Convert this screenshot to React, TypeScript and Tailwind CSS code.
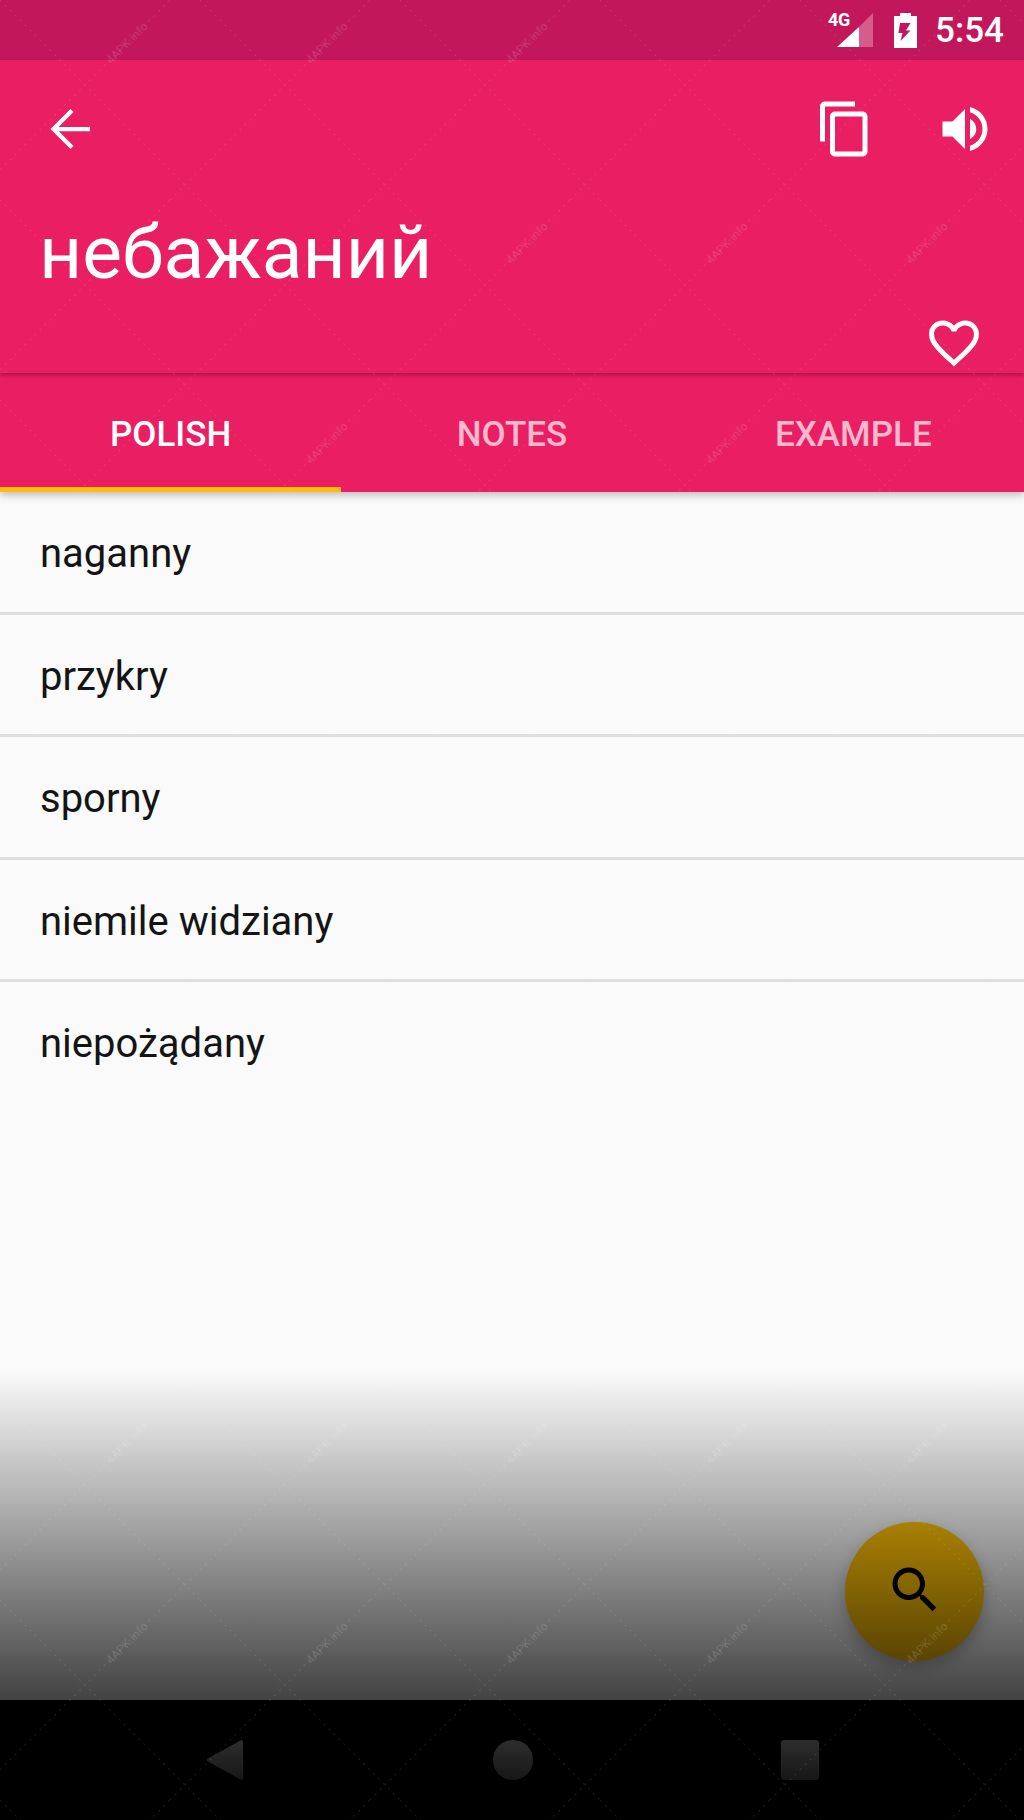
import React from "react";

const Icon = ({ d, className }: { d: string; className: string }) => (
  <svg viewBox="0 0 24 24" className={className} fill="currentColor">
    <path d={d} />
  </svg>
);

const items = ["naganny", "przykry", "sporny", "niemile widziany", "niepożądany"];

// stamp centres that stay clear of the page's own text
const stamps = [
  [127, 43], [327, 43], [527, 43],
  [527, 243], [727, 243], [927, 243],
  [327, 443], [727, 443],
  [127, 1443], [327, 1443], [527, 1443], [727, 1443], [927, 1443],
  [127, 1643], [327, 1643], [527, 1643], [727, 1643], [927, 1643],
];

export default function App() {
  return (
    <div
      className="relative flex h-[1820px] w-[1024px] flex-col overflow-hidden bg-[#fafafa]"
      style={{ fontFamily: "Roboto, 'Noto Sans', sans-serif" }}
    >
      {/* status bar */}
      <div className="flex h-[60px] shrink-0 items-center justify-end bg-[#c2185b] text-white">
        <div className="relative mr-[21px] h-[34px] w-[36px]">
          <svg viewBox="0 0 36 34" className="h-[34px] w-[36px]">
            <path d="M36 0V34H22V14Z" fill="#fff" fillOpacity="0.3" />
            <path d="M22 14V34H0Z" fill="#fff" />
          </svg>
          <span className="absolute left-[-9px] top-[-2px] text-[18px] font-bold leading-[18px] tracking-[-0.5px]">4G</span>
        </div>
        <svg viewBox="0 0 23 35" className="mr-[18px] h-[35px] w-[23px]">
          <path
            fillRule="evenodd"
            fill="#fff"
            d="M6 0H17V3H23V35H0V3H6ZM6 10H16.5L12 17.5H16.5L6.5 28L8.5 20H4.5Z"
          />
        </svg>
        <span className="mr-[20px] text-[35px] font-medium leading-none">5:54</span>
      </div>

      {/* header */}
      <div className="relative z-20 flex h-[313px] shrink-0 flex-col bg-[#e91e63] text-white shadow-[0_2px_4px_rgba(0,0,0,0.3)]">
        <div className="flex items-center pl-[40px] pr-[29px] pt-[39px]">
          <svg viewBox="0 0 24 24" className="h-[60px] w-[60px]" fill="none" stroke="currentColor" strokeWidth="1.7">
            <path d="M20 12H5.6M12.8 4.6L5.4 12L12.8 19.4" />
          </svg>
          <Icon
            className="ml-auto h-[60px] w-[60px]"
            d="M16 1H4c-1.1 0-2 .9-2 2v14h2V3h12V1zm3 4H8c-1.1 0-2 .9-2 2v14c0 1.1.9 2 2 2h11c1.1 0 2-.9 2-2V7c0-1.1-.9-2-2-2zm0 16H8V7h11v14z"
          />
          <Icon
            className="ml-[60px] h-[60px] w-[60px]"
            d="M3 9v6h4l5 5V4L7 9H3zm13.5 3c0-1.77-1.02-3.29-2.5-4.03v8.05c1.48-.73 2.5-2.25 2.5-4.02zM14 3.23v2.06c2.89.86 5 3.54 5 6.71s-2.11 5.85-5 6.71v2.06c4.01-.91 7-4.49 7-8.77s-2.99-7.86-7-8.77z"
          />
        </div>
        <div className="pl-[39px] pt-[53px] text-[75px] leading-[80px]">небажаний</div>
        <div className="mt-auto flex justify-end pr-[40px]">
          <Icon
            className="h-[60px] w-[60px]"
            d="M16.5 3c-1.74 0-3.41.81-4.5 2.09C10.91 3.81 9.24 3 7.5 3 4.42 3 2 5.42 2 8.5c0 3.78 3.4 6.86 8.55 11.54L12 21.35l1.45-1.32C18.6 15.36 22 12.28 22 8.5 22 5.42 19.58 3 16.5 3zm-4.4 15.55l-.1.1-.1-.1C7.14 14.24 4 11.39 4 8.5 4 6.5 5.5 5 7.5 5c1.54 0 3.04.99 3.57 2.36h1.87C13.46 5.99 14.96 5 16.5 5c2 0 3.5 1.5 3.5 3.5 0 2.89-3.14 5.74-7.9 10.05z"
          />
        </div>
      </div>

      {/* tabs */}
      <div className="relative z-10 grid h-[119px] shrink-0 grid-cols-3 bg-[#e91e63] text-[35px] font-medium shadow-[0_3px_8px_rgba(0,0,0,0.25)]">
        <div className="flex items-center justify-center border-b-[5px] border-[#ffbc08] pt-[11px] text-white">POLISH</div>
        <div className="flex items-center justify-center border-b-[5px] border-transparent pt-[11px] text-white/70">NOTES</div>
        <div className="flex items-center justify-center border-b-[5px] border-transparent pt-[11px] text-white/70">EXAMPLE</div>
      </div>

      {/* list */}
      <div className="flex-1 bg-[#fafafa] text-[40px] text-[#141414]">
        {items.map((t, i) => (
          <div
            key={t}
            className={
              i < items.length - 1
                ? "flex h-[122.6px] items-center border-b-[3px] border-[#dedede] pl-[40px] pt-[5px]"
                : "flex h-[122.6px] items-center border-b-[3px] border-transparent pl-[40px] pt-[3px]"
            }
          >
            {t}
          </div>
        ))}
      </div>

      {/* navigation bar */}
      <div className="flex h-[120px] shrink-0 items-center justify-center gap-[248px] bg-black text-white">
        <svg viewBox="0 0 40 40" className="h-[40px] w-[40px]">
          <path d="M35.5 0.5L3 18.5a1.6 1.6 0 0 0 0 3L35.5 39.5a1.5 1.5 0 0 0 2.5-1.2V1.7a1.5 1.5 0 0 0-2.5-1.2Z" fill="#fff" />
        </svg>
        <div className="h-[40px] w-[40px] rounded-full bg-white" />
        <div className="h-[40px] w-[38px] rounded-[3px] bg-white" />
      </div>

      {/* floating button */}
      <div className="absolute left-[845px] top-[1522px] z-30 flex h-[139px] w-[139px] items-center justify-center rounded-full bg-[#ffc107] pb-[3px] text-black shadow-[0_6px_16px_rgba(0,0,0,0.25)]">
        <Icon
          className="h-[60px] w-[60px]"
          d="M15.5 14h-.79l-.28-.27C15.41 12.59 16 11.11 16 9.5 16 5.91 13.09 3 9.5 3S3 5.91 3 9.5 5.91 16 9.5 16c1.61 0 3.09-.59 4.23-1.57l.27.28v.79l5 4.99L20.49 19l-4.99-5zm-6 0C7.01 14 5 11.99 5 9.5S7.01 5 9.5 5 14 7.01 14 9.5 11.99 14 9.5 14z"
        />
      </div>

      {/* dark fade over the bottom of the page */}
      <div className="pointer-events-none absolute inset-x-0 bottom-0 z-40 h-[450px] bg-gradient-to-b from-black/0 to-black" />

      {/* faint repeating site stamp over the whole picture */}
      <svg className="pointer-events-none absolute inset-0 z-50 h-[1820px] w-[1024px]">
        <defs>
          <pattern id="lattice" width="200" height="200" patternUnits="userSpaceOnUse">
            <path
              d="M0 0L200 200M0 170L170 0M170 200L200 170"
              fill="none"
              stroke="#fff"
              strokeOpacity="0.08"
              strokeWidth="1.5"
              strokeDasharray="2 5"
            />
          </pattern>
        </defs>
        <rect width="1024" height="1820" fill="url(#lattice)" />
      </svg>
      {stamps.map(([x, y]) => (
        <span
          key={`${x}-${y}`}
          className="pointer-events-none absolute z-50 -translate-x-1/2 -translate-y-1/2 -rotate-45 text-[12px] leading-none text-white/15"
          style={{ left: x, top: y }}
        >
          4APK.info
        </span>
      ))}
    </div>
  );
}
